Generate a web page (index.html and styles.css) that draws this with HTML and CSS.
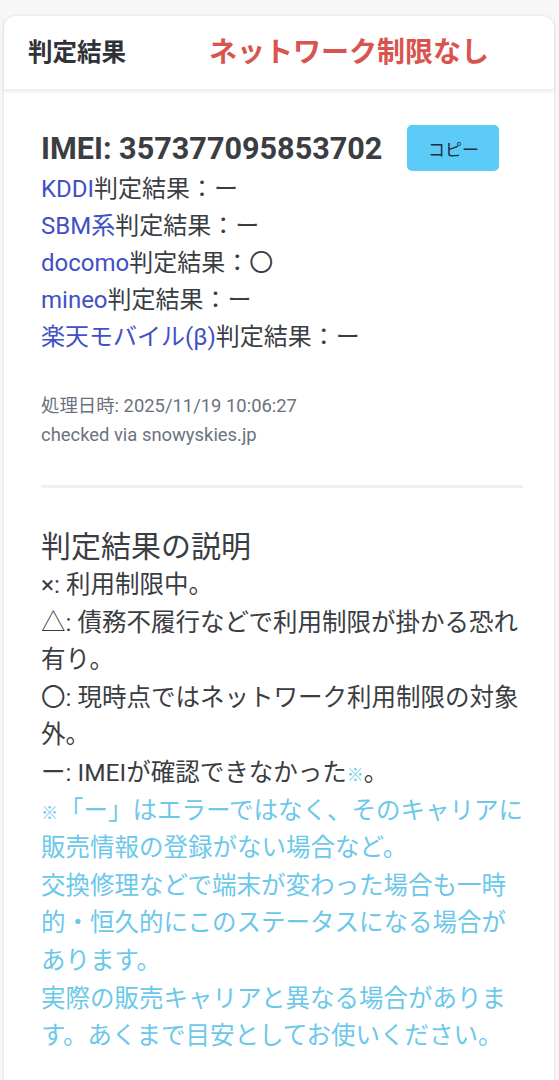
FILE: index.html
```html
<!DOCTYPE html>
<html lang="ja">
<head>
<meta charset="utf-8">
<title>判定結果</title>
<link rel="stylesheet" href="styles.css">
</head>
<body>
<div class="card">
  <div class="card-header">
    <span class="header-title">判定結果</span>
    <span class="header-status">ネットワーク制限なし</span>
  </div>
  <div class="card-body">
    <div class="imei-row">
      <span class="imei">IMEI: 357377095853702</span>
      <button class="copy-btn" type="button">コピー</button>
    </div>
    <div class="results">
      <div><a class="carrier">KDDI</a>判定結果：ー</div>
      <div><a class="carrier">SBM系</a>判定結果：ー</div>
      <div><a class="carrier">docomo</a>判定結果：〇</div>
      <div><a class="carrier">mineo</a>判定結果：ー</div>
      <div><a class="carrier">楽天モバイル(β)</a>判定結果：ー</div>
    </div>
    <div class="meta">
      <div>処理日時: 2025/11/19 10:06:27</div>
      <div>checked via snowyskies.jp</div>
    </div>
    <hr class="divider">
    <h2 class="explain-title">判定結果の説明</h2>
    <div class="explain">
      <p>×: 利用制限中。</p>
      <p>△: 債務不履行などで利用制限が掛かる恐れ有り。</p>
      <p>〇: 現時点ではネットワーク利用制限の対象外。</p>
      <p>ー: IMEIが確認できなかった<span class="note-mark">※</span>。</p>
      <p class="note"><span class="note-mark lead">※</span><span>「ー」はエラーではなく、そのキャリアに販売情報の登録がない場合など。</span><br>交換修理などで端末が変わった場合も一時的・恒久的にこのステータスになる場合があります。<br>実際の販売キャリアと異なる場合があります。あくまで目安としてお使いください。</p>
    </div>
  </div>
</div>
</body>
</html>
```
FILE: styles.css
```css
html, body {
  margin: 0;
  padding: 0;
}
body {
  background: #f7f7f7;
  font-family: Roboto, "Noto Sans CJK JP", sans-serif;
  color: #3a3d42;
  padding: 16px 5px 0 4px;
}
.card {
  background: #fff;
  border-radius: 12px 12px 0 0;
  box-shadow: 0 0 3px rgba(0,0,0,0.12);
  min-height: 1080px;
}
.card-header {
  height: 74px;
  box-sizing: border-box;
  display: flex;
  align-items: center;
  padding: 0 24px 5px;
  box-shadow: 0 2px 3px rgba(0,0,0,0.08);
  border-bottom: 1px solid #ececec;
}
.header-title {
  font-size: 24.5px;
  font-weight: 700;
  color: #2f3338;
  width: 181px;
}
.header-status {
  font-size: 28px;
  font-weight: 700;
  color: #d9534f;
}
.card-body {
  padding: 35px 28px 0 37px;
}
.imei-row {
  display: flex;
  align-items: center;
  height: 46px;
}
.imei {
  font-size: 30.6px;
  font-weight: 700;
  color: #3a3d42;
  margin-right: 25px;
}
.copy-btn {
  border: none;
  background: #5ccbf7;
  color: #1f2d3d;
  font-family: Roboto, "Noto Sans CJK JP", sans-serif;
  font-size: 17px;
  width: 92px;
  height: 46px;
  border-radius: 5px;
  padding: 0;
}
.results {
  font-size: 24px;
  line-height: 37px;
}
.carrier {
  color: #3f51c5;
}
.meta {
  margin-top: 35px;
  font-size: 18.4px;
  line-height: 29px;
  color: #6b7280;
}
.divider {
  border: none;
  height: 3px;
  background: #f0f0f0;
  margin: 36px 3px 0 0;
}
.explain-title {
  font-size: 30px;
  font-weight: 400;
  line-height: 38px;
  margin: 40px 0 0;
  color: #3a3d42;
}
.explain {
  font-size: 24.5px;
  line-height: 37.6px;
  text-spacing-trim: space-all;
}
.explain p {
  margin: 0;
}
.note-mark {
  font-size: 17px;
  line-height: 1;
}
.note-mark.lead {
  margin-right: 1px;
}
.note-mark, .note {
  color: #6cc8ea;
}
```
